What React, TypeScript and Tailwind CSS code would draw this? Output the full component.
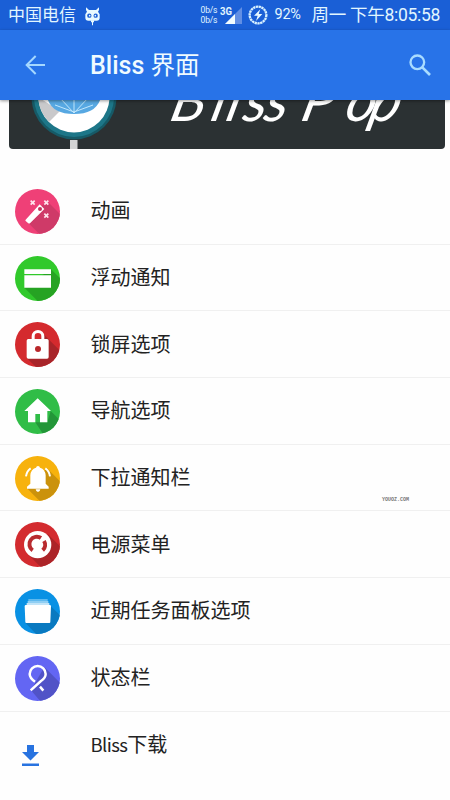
import type { ReactNode } from "react";

const cjk = "font-['Noto_Sans_CJK_SC',sans-serif]";
const mixed = "font-[Roboto,'Noto_Sans_CJK_SC',sans-serif]";

function StatusBar() {
  return (
    <div className={`flex h-[30px] items-center bg-[#1a5fd6] pl-[8px] pr-[10px] text-[#e2f6ff] ${mixed}`}>
      <span className="text-[17px] leading-[30px]">中国电信</span>

      {/* cid head */}
      <svg className="ml-[9px] mt-[1px] h-[20px] w-[15px]" viewBox="0 0 45 60">
        <path d="M3 4l9 8h21l9-8v8l-3 5 5 8v10q0 9-9 9H10q-9 0-9-9V25l5-8-3-5z" fill="#e9faff" />
        <circle cx="13" cy="29" r="6.5" fill="#1a5fd6" />
        <circle cx="32" cy="29" r="6.5" fill="#1a5fd6" />
        <circle cx="14" cy="29" r="2.5" fill="#e9faff" />
        <circle cx="31" cy="29" r="2.5" fill="#e9faff" />
        <path d="M18 43h9v6h-3v9h-3v-9h-3z" fill="#e9faff" />
      </svg>

      <div className="ml-auto flex w-[16px] flex-col whitespace-nowrap text-[8.5px] leading-[10px] tracking-[-0.2px]">
        <span>0b/s</span>
        <span>0b/s</span>
      </div>

      {/* signal */}
      <svg className="ml-[3px] h-[20px] w-[23px]" viewBox="0 0 23 20">
        <path d="M22 2v17H5z" fill="#628fe4" />
        <path d="M15 9v10H5z" fill="#f2fcff" />
        <text x="0" y="9.5" fontSize="10" fontWeight="700" fill="#e2f6ff" textLength="12" lengthAdjust="spacingAndGlyphs">3G</text>
      </svg>

      {/* battery */}
      <svg className="ml-[5px] h-[20px] w-[20px]" viewBox="0 0 60 60" fill="none">
        <circle cx="30" cy="30" r="25" stroke="#d8f1ff" strokeWidth="7" strokeDasharray="7 1.5" />
        <path d="M37 13L18 32h11l-5 16 19-21H32z" fill="#e9faff" />
      </svg>

      <span className="ml-[7px] w-[29px] whitespace-nowrap text-[14.5px] leading-[30px] tracking-[-0.3px]">92%</span>
      <span className="ml-[8px] whitespace-nowrap text-[17.5px] leading-[30px] tracking-[-0.3px]">周一 下午8:05:58</span>
    </div>
  );
}

function Toolbar() {
  return (
    <div className="relative z-10 flex h-[70px] items-center bg-[#2873e8] shadow-[0_1px_3px_rgba(0,0,0,0.4)]">
      <svg className="ml-[25px] h-[20px] w-[20px]" viewBox="0 0 60 60" fill="none" stroke="#a5d8ff" strokeWidth="6">
        <path d="M60 30H6M32 3L5 30l27 27" />
      </svg>
      <h1 className={`ml-[45px] mt-[1px] text-[25px] font-medium leading-[36px] text-[#f0fbff] ${mixed}`}>
        Bliss <span className="text-[24.5px] font-normal">界面</span>
      </h1>
      <svg className="ml-auto mr-[19px] h-[22px] w-[22px]" viewBox="0 0 66 66" fill="none" stroke="#a9dcff">
        <circle cx="25" cy="25" r="20.5" strokeWidth="7" />
        <path d="M40 40l23 23" strokeWidth="8" />
      </svg>
    </div>
  );
}

function Banner() {
  return (
    <div className="mr-[5px] ml-[9px] h-[49px] overflow-hidden rounded-b-[4px] bg-[#2b3133]">
      <svg className="h-[49px] w-[436px]" viewBox="9 100 436 49">
        <circle cx="74" cy="97" r="42.5" fill="#165a67" />
        <circle cx="74" cy="97" r="40" fill="#1d7688" />
        <circle cx="74" cy="97" r="35.5" fill="#fff" />
        <path d="M38 97l22 14-11 11q-10-10-11-25z" fill="#c9c9cb" />
        <path d="M47 97q4 17 27 17t27-17z" fill="#57a8e2" />
        <path d="M74 113V98M74 113L60 98M74 113l14-15M74 112l-19-7M74 112l19-7" stroke="#c1e6fb" strokeWidth="1" fill="none" />
        <rect x="70" y="140" width="7.5" height="9" fill="#d3d4d5" />
        <g transform="translate(0 121) skewX(-14)">
          <text
            x="168 209 224 241 262 299 343 367"
            y="0"
            fontFamily="Lato, sans-serif"
            fontSize="58"
            fontStyle="italic"
            fill="#fff"
          >
            BlissPop
          </text>
        </g>
      </svg>
    </div>
  );
}

type DiscProps = {
  color: string;
  shade: string;
  shadow: string;
  id: string;
  children: ReactNode;
};

// round icon with a long shadow falling to the bottom right
function Disc({ color, shade, shadow, id, children }: DiscProps) {
  return (
    <svg className="mt-px h-[45px] w-[45px]" viewBox="0 0 135 135" fill="none">
      <clipPath id={id}>
        <circle cx="67.5" cy="67.5" r="67.5" />
      </clipPath>
      <g clipPath={`url(#${id})`}>
        <rect width="135" height="135" fill={color} />
        <path d={shadow} fill={shade} />
        {children}
      </g>
    </svg>
  );
}

const items = [
  {
    label: "动画",
    icon: (
      <Disc id="wand" color="#ef4077" shade="#cf3a68" shadow="M34 96l40-40 22-20 60 60v60H94z">
        <path d="M32 92l42-46 14 14-43 43q-3 2-6-1l-7-6q-2-2 0-4z" fill="#fff" />
        <circle cx="75" cy="60" r="6" fill="#c2325d" />
        <path d="M47 35l12 12M59 35L47 47M88 35l12 12M100 35L88 47M88 74l12 12M100 74L88 86" stroke="#ffe3ec" strokeWidth="5" />
      </Disc>
    ),
  },
  {
    label: "浮动通知",
    icon: (
      <Disc id="card" color="#31c92b" shade="#26a323" shadow="M28 95l80-55 60 60v80h-55z">
        <path d="M28 40h80v14H28zM28 58h80v37H28z" fill="#fff" />
      </Disc>
    ),
  },
  {
    label: "锁屏选项",
    icon: (
      <Disc id="lock" color="#d42a2e" shade="#a82429" shadow="M36 109l50-72 80 80v60h-60z">
        <path d="M54.500 56V43a14.500 14.500 0 0 1 29 0v13" stroke="#fff" strokeWidth="9" />
        <rect x="35" y="51" width="66" height="59" rx="5" fill="#fff" />
        <circle cx="69" cy="81" r="9" fill="#b9272b" />
      </Disc>
    ),
  },
  {
    label: "导航选项",
    icon: (
      <Disc id="home" color="#30bd47" shade="#239638" shadow="M61 100h36l10-34 50 50v50h-52z">
        <path d="M68 28l40 38H97v34H75V75H61v25H39V66H28z" fill="#fff" />
      </Disc>
    ),
  },
  {
    label: "下拉通知栏",
    icon: (
      <Disc id="bell" color="#f7b20d" shade="#cb920c" shadow="M36 97l60-60 60 60v70h-50z">
        <path d="M69 30q5 0 6 5 16 5 17 23v25l9 9v6H36v-6l10-9V58q1-18 17-23 1-5 6-5zM62 100h14q-1 8-7 8t-7-8z" fill="#fff" />
        <path d="M33 61q2-16 14-24M105 61q-2-16-14-24" stroke="#fff" strokeWidth="6" />
      </Disc>
    ),
  },
  {
    label: "电源菜单",
    icon: (
      <Disc id="power" color="#d32b2f" shade="#ac2428" shadow="M39 97l60-60 60 60v70h-50z">
        <circle cx="68" cy="68" r="41" fill="#fff" />
        <path d="M53 85a22 22 0 0 1 25-37M87 57a22 22 0 0 1-4 28" stroke="#b92b2f" strokeWidth="12" />
        <path d="M87 42L66 71" stroke="#fff" strokeWidth="5" />
      </Disc>
    ),
  },
  {
    label: "近期任务面板选项",
    icon: (
      <Disc id="recents" color="#0991e4" shade="#0979c0" shadow="M31 101l76-50 50 50v70h-60z">
        <path d="M40 30h58v22H40z" fill="#5fb9ee" />
        <path d="M38 36h62v16H38z" fill="#8fcef3" />
        <path d="M35 42h68v12H35z" fill="#c2e4f8" />
        <path d="M29 52q0-4 4-4h71q4 0 4 4l-2 47q0 3-3 3H34q-3 0-3-3z" fill="#fff" />
      </Disc>
    ),
  },
  {
    label: "状态栏",
    icon: (
      <Disc id="ribbon" color="#6366f3" shade="#5153c7" shadow="M48 103l40-70 70 70v70h-50z">
        <path d="M47 103l30-27Q92 66 92 54a24 24 0 0 0-48 0q0 12 16 23M75 92l10 12" stroke="#fff" strokeWidth="7.5" />
      </Disc>
    ),
  },
];

export default function App() {
  return (
    <div className="flex h-[800px] w-[450px] flex-col overflow-hidden bg-[#fefefe]">
      <StatusBar />
      <Toolbar />
      <Banner />

      <ul className={`mt-[29px] text-[20px] text-[#222] ${cjk}`}>
        {items.map((item) => (
          <li key={item.label} className="flex h-[66.7px] items-center border-b border-[#f0f0f0] pl-[15px]">
            {item.icon}
            <span className="-mt-px ml-[30.500px] leading-[30px]">{item.label}</span>
          </li>
        ))}
        <li className="flex h-[66.7px] items-center pl-[22px]">
          <svg className="mt-[22px] h-[21px] w-[17px]" viewBox="0 0 17 21" fill="#2873e0">
            <path d="M5 0h7v7h5l-8.500 8.500L0 7h5zM0 18.500h17V21H0z" />
          </svg>
          <span className="-mt-[2px] ml-[51.500px] leading-[30px]">
            <span className="text-[18.5px] tracking-[-0.6px]">Bliss</span>下载
          </span>
        </li>
      </ul>

      <span className="absolute left-[382px] top-[495px] font-['Liberation_Mono',monospace] text-[5px] font-bold leading-[10px] text-[#777]">
        YOUOZ.COM
      </span>
    </div>
  );
}
